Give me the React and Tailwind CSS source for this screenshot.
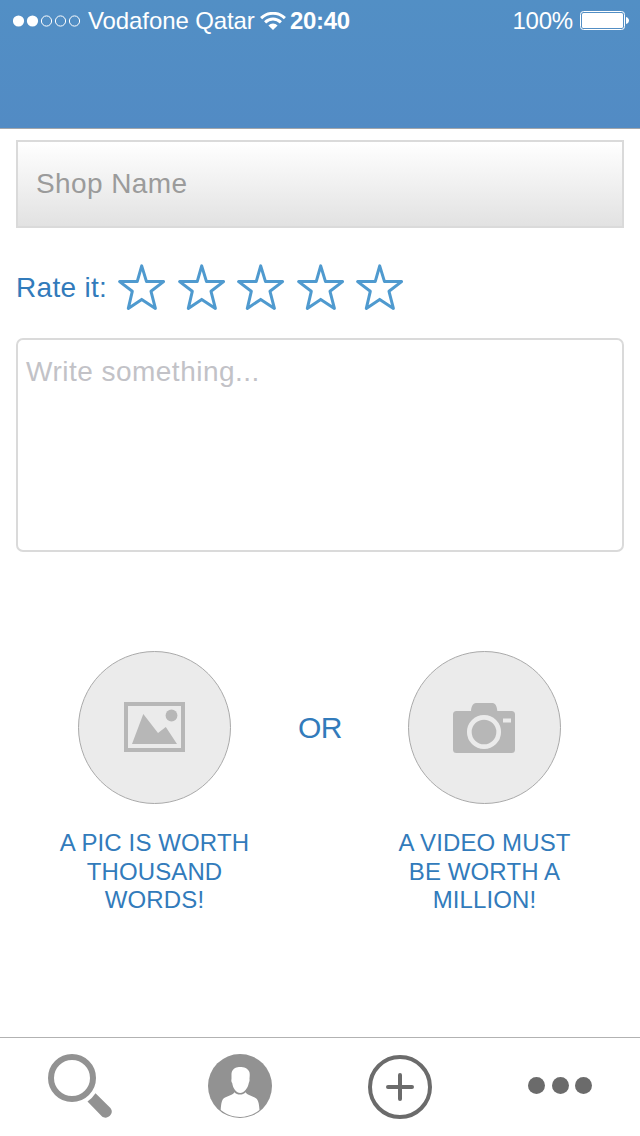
import React from "react";

function StatusBar() {
  return (
    <div className="flex h-[41px] items-center pl-[13px] pr-[11px] text-[24px] leading-[30px] text-white">
      <svg className="h-[12px] w-[68px]" viewBox="0 0 68 12" fill="none">
        <circle cx="5.5" cy="6" r="5.6" fill="white" />
        <circle cx="19.5" cy="6" r="5.6" fill="white" />
        <circle cx="33.5" cy="6" r="5.1" stroke="white" />
        <circle cx="47.5" cy="6" r="5.1" stroke="white" />
        <circle cx="61.5" cy="6" r="5.1" stroke="white" />
      </svg>
      <span className="ml-[7px] w-[172px] whitespace-nowrap tracking-[-0.1px]">Vodafone Qatar</span>
      <svg className="h-[18px] w-[26px] shrink-0" viewBox="0 0 26 18" fill="none" stroke="white" strokeWidth="3">
        <path d="M1.1 6.2C7.8-.3 18.2-.3 24.9 6.2" />
        <path d="M5.1 10.4c4.7-4.4 11.1-4.4 15.8 0" />
        <path d="M8.4 13.4a6.5 6.5 0 0 1 9.2 0L13 18Z" fill="white" stroke="none" />
      </svg>
      <span className="ml-[4px] font-bold tracking-[-0.3px]">20:40</span>
      <span className="ml-auto whitespace-nowrap tracking-[-0.2px]">100%</span>
      <svg className="ml-[7px] h-[19px] w-[49px] shrink-0" viewBox="0 0 49 19" fill="none">
        <rect x=".5" y=".5" width="44" height="18" rx="3" stroke="white" />
        <rect x="2" y="2" width="41" height="15" rx="1.5" fill="white" />
        <path d="M46 6c4 1 4 6 0 7Z" fill="white" />
      </svg>
    </div>
  );
}

function Star() {
  return (
    <svg className="h-[48px] w-[50px]" viewBox="0 0 50 48" fill="none" stroke="#4f9acf" strokeWidth="3" strokeLinejoin="round">
      <path d="M24.7 2.9 29.5 18.6H46.6L34 28.3 38.4 45.4 24.7 36.4 11.3 45.4 15.3 28.3 2.6 18.6H20.2Z" />
    </svg>
  );
}

function PictureIcon() {
  return (
    <svg className="mb-px h-[50px] w-[62px]" viewBox="0 0 62 50">
      <rect x="3" y="2" width="57" height="46" fill="none" stroke="#b7b7b7" strokeWidth="4" />
      <path d="M9 42 20.3 12 35 31l7.8-6L54 42Z" fill="#b7b7b7" />
      <circle cx="48.5" cy="13.5" r="5.9" fill="#b7b7b7" />
    </svg>
  );
}

function CameraIcon() {
  return (
    <svg className="h-[50px] w-[62px]" viewBox="0 0 62 50">
      <path d="M3.5 8H18c.3-4 1.700-8 5-8h16.500c3.200 0 4.500 4 4.800 8h14.200a3.500 3.500 0 0 1 3.500 3.500v35a3.500 3.500 0 0 1-3.500 3.500h-55A3.500 3.500 0 0 1 0 46.500v-35A3.500 3.500 0 0 1 3.500 8Z" fill="#b7b7b7" />
      <circle cx="31" cy="29" r="14.7" fill="none" stroke="#ebebeb" strokeWidth="4.7" />
      <path d="M50 15.500h8v4h-8z" fill="#ebebeb" />
    </svg>
  );
}

function UploadOption({ icon, lines }) {
  return (
    <div className="flex w-[200px] flex-col items-center">
      <button className="flex size-[153px] items-center justify-center rounded-full border border-[#aaaaaa] bg-[#ebebeb]">
        {icon}
      </button>
      <p className="mt-[25px] pl-px text-center text-[24px] leading-[28.5px] tracking-[0.12px] text-[#327bbb]">
        {lines.map((line) => (
          <span key={line} className="block whitespace-nowrap">{line}</span>
        ))}
      </p>
    </div>
  );
}

function TabBar() {
  return (
    <nav className="grid h-[99px] grid-cols-4 items-start justify-items-center border-t border-[#b2b2b2] pt-[16px]">
      <svg className="size-[64px]" viewBox="0 0 64 64" fill="none">
        <circle cx="24" cy="24" r="21" stroke="#929292" strokeWidth="6" />
        <path d="M47.5 39.3 62.2 53.8c5 5.500-3 13-8.400 8.400L39.500 47.500Q44.500 44 47.500 39.300Z" fill="#929292" />
      </svg>
      <svg className="size-[64px]" viewBox="0 0 64 64">
        <circle cx="32" cy="32" r="32" fill="#929292" />
        <path d="M12.700 56c.500-7 1.100-11 4.300-12.500L24 40.500q1.800-.800 2.300-2.300c3 3.200 8.400 3.200 11.400 0q.500 1.500 2.300 2.300l6.700 3C50.200 45 51 49 51.500 56 40 65.200 24 65.200 12.700 56Z" fill="white" />
        <path d="M23.500 21.500C23.200 16 26 14 29.700 13.200 34 12.600 39.700 13.500 41.400 18c.600 2.200.300 4.500.100 6.500.300 1.700-.100 3.300-.700 4.500C39.800 34.500 36 39 32.300 39 28.200 39 25 34.500 24.200 29c-.800-1-1.100-2.500-.700-4Z" fill="white" />
      </svg>
      <svg className="mt-px size-[64px]" viewBox="0 0 64 64" fill="none" stroke="#6b6b6b" strokeWidth="4" strokeLinecap="round">
        <circle cx="32" cy="32" r="30" />
        <path d="M20 32h24M32 20v24" />
      </svg>
      <svg className="size-[64px]" viewBox="0 0 64 64" fill="#6b6b6b">
        <circle cx="8.5" cy="31.5" r="8.5" />
        <circle cx="32.5" cy="31.5" r="8.5" />
        <circle cx="55.5" cy="31.5" r="8.5" />
      </svg>
    </nav>
  );
}

export default function App() {
  return (
    <div className="flex h-[1136px] w-[640px] flex-col overflow-hidden bg-white font-['Liberation_Sans',Arial,sans-serif]">
      <header className="h-[129px] shrink-0 border-b border-[#a2a6ab] bg-linear-to-b from-[#528fc5] to-[#528bc4]">
        <StatusBar />
      </header>

      <main className="flex grow flex-col px-[16px] pt-[11px]">
        <input
          className="h-[88px] w-full border-2 border-[#dadada] bg-linear-to-b from-white to-[#e2e2e2] px-[18px] text-[28px] tracking-[0.4px] outline-none placeholder:text-[#9b9b9b]"
          placeholder="Shop Name"
        />

        <div className="mt-[35px] flex h-[48px] items-center text-[28px] text-[#327bbb]">
          <span className="w-[101px] whitespace-nowrap pt-[2px] tracking-[0.3px]">Rate it:</span>
          <div className="flex gap-[9.6px]">
            <Star />
            <Star />
            <Star />
            <Star />
            <Star />
          </div>
        </div>

        <textarea
          className="mt-[27px] h-[214px] w-full resize-none rounded-[7px] border-2 border-[#dadada] px-[8px] py-[15px] text-[28px] leading-[34px] tracking-[0.48px] outline-none placeholder:text-[#c2c2c7]"
          placeholder="Write something..."
        />

        <section className="mt-[99px] flex items-start pl-[38px]">
          <UploadOption icon={<PictureIcon />} lines={["A PIC IS WORTH", "THOUSAND", "WORDS!"]} />
          <span className="w-[130px] pl-[2px] pt-[59px] text-center text-[30px] leading-[36px] tracking-[-0.5px] text-[#327bbb]">OR</span>
          <UploadOption icon={<CameraIcon />} lines={["A VIDEO MUST", "BE WORTH A", "MILLION!"]} />
        </section>
      </main>

      <TabBar />
    </div>
  );
}
